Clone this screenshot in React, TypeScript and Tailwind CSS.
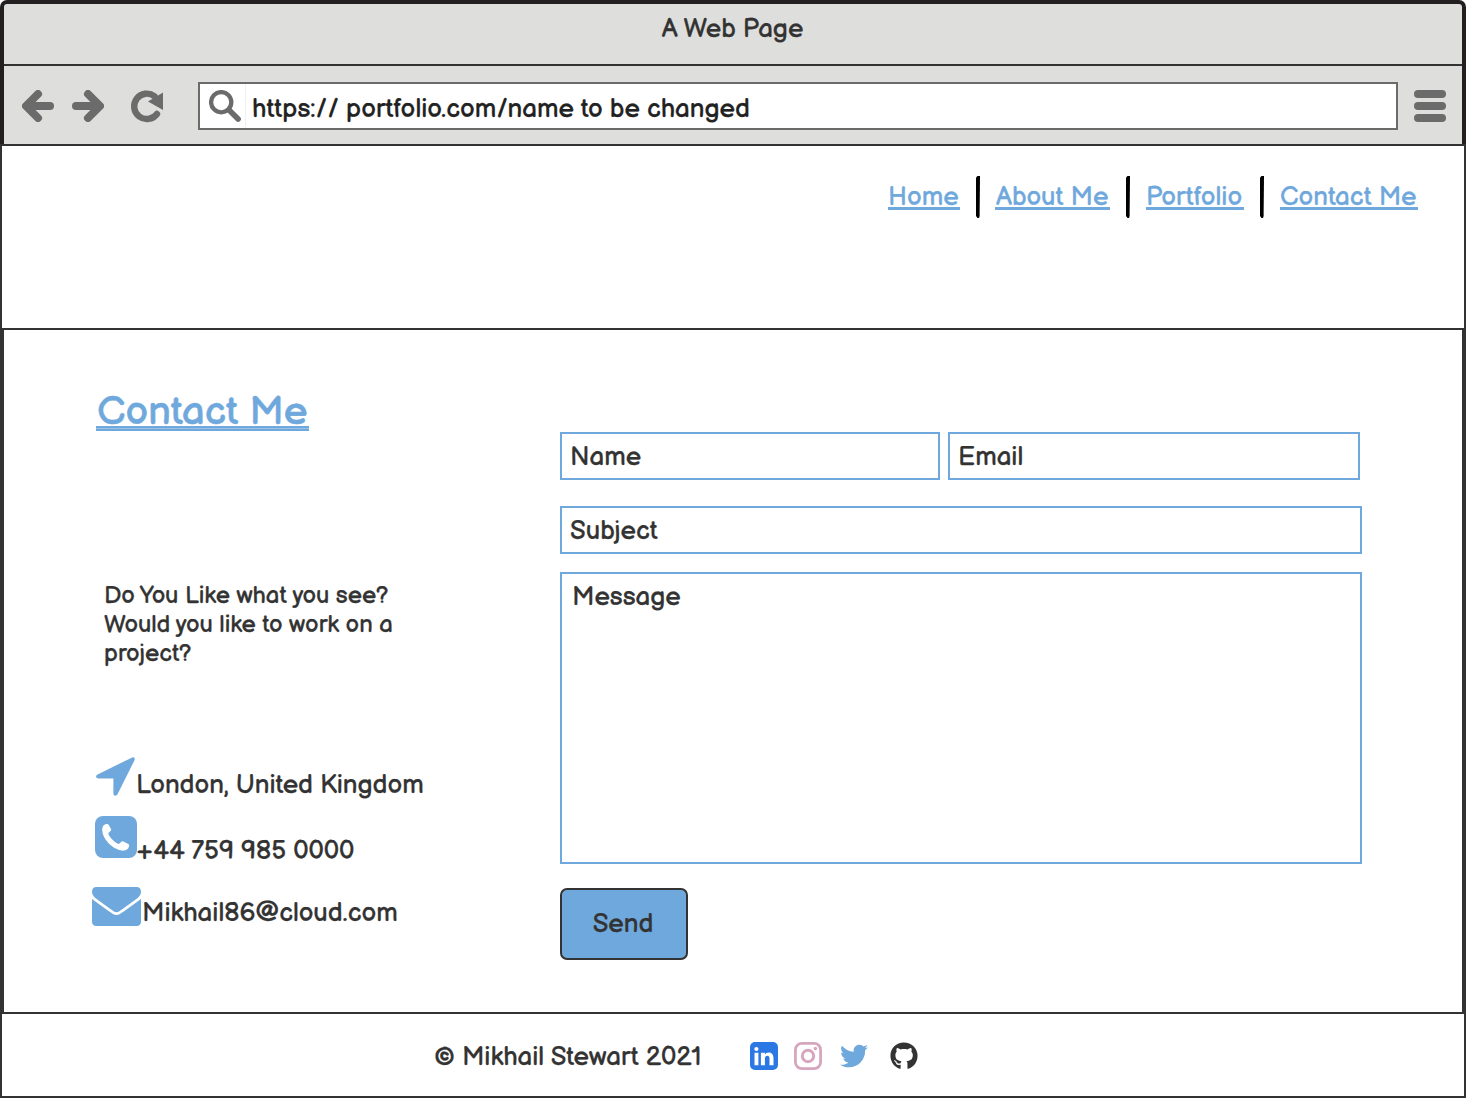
import type { ReactNode } from 'react';
import { FaGithub, FaTwitter } from 'react-icons/fa';

function ArrowIcon({ flip = false }: { flip?: boolean }) {
  return (
    <svg viewBox="0 0 32 32" className={flip ? 'size-8 -scale-x-100' : 'size-8'} fill="none" stroke="#6b6b6b" strokeWidth="8" strokeLinecap="round" strokeLinejoin="round">
      <path d="M16 4 4 16 16 28" />
      <path d="M8 16h20" />
      <path d="M-.3 16 2 13.5v5z" fill="#6b6b6b" stroke="none" />
    </svg>
  );
}

function RefreshIcon() {
  return (
    <svg viewBox="0 0 32 32" className="size-8 overflow-visible">
      <path d="M26 24A12.7 12.7 0 1 1 23.5 6.2" fill="none" stroke="#6b6b6b" strokeWidth="6.4" strokeLinecap="round" />
      <path d="M32 2.6V20L17 11.5z" fill="#6b6b6b" />
    </svg>
  );
}

function SearchIcon() {
  return (
    <svg viewBox="0 0 32 32" className="size-8" fill="none" stroke="#6b6b6b" strokeLinecap="round">
      <circle cx="12.2" cy="12.2" r="10.1" strokeWidth="4.3" />
      <path d="M20.5 20.5 29.1 29" strokeWidth="5.6" />
    </svg>
  );
}

function LocationIcon() {
  return (
    <svg viewBox="0 0 39 39" className="h-[39px] w-[39px]" fill="#6fa8dc">
      <path d="M36.2.4 1.6 17.4C-.8 18.6-.2 21.4 2.4 21.4H17.4V36.4C17.4 39 20.3 39.4 21.5 37.2L38.5 3.2C39.4 1.2 38-.5 36.2.4z" />
    </svg>
  );
}

function PhoneIcon() {
  return (
    <svg viewBox="0 0 42 42" className="h-[42px] w-[42px]">
      <rect width="42" height="42" rx="8" fill="#6fa8dc" />
      <path d="M8.9 9.1C10 8.200 11.5 7.8 12.6 7.900c.8.1 1 .7 1.300 1.400l2.100 3.600c.4.800.2 1.300-.3 1.900-1.200 1.300-2.800 2.200-2.200 3.700 1.300 2.800 5.700 7.300 9.500 9.300 1.300.5 2.200-1 3.300-2 .7-.6 1.300-.7 2.100-.3l4.400 2.300c.9.500 1.400.9 1.300 1.700-.1 1.500-.7 2.900-1.600 3.600-1.400 1.200-3.700 1.700-5.600 1.500-4.200-.5-9.500-3.400-13.100-7.100C9.500 23.100 7.300 18.500 7.200 14.300c0-2.200.5-4.200 1.700-5.200z" fill="#fff" />
    </svg>
  );
}

function MailIcon() {
  return (
    <svg viewBox="0 0 49 39" className="h-[39px] w-[49px]" fill="#6fa8dc">
      <path d="M4.500 0h40C47.500 0 49 2 49 4.500c0 3-1.700 5.400-4.300 7.200L29.500 22.700c-1.500 1-3.400 2.600-5 2.600s-3.500-1.600-5-2.600L4.300 11.700C1.700 9.900 0 7.500 0 4.500 0 2 1.500 0 4.500 0z" />
      <path d="M0 11.700c.8.900 1.700 1.700 2.700 2.400l14.200 10.200c2.600 1.800 5 3.700 7.600 3.700s5-1.900 7.600-3.700l14.200-10.200c1-.7 1.900-1.500 2.700-2.400v23.300c0 2.200-1.800 4-4 4H4c-2.200 0-4-1.800-4-4z" />
    </svg>
  );
}

function LinkedinIcon() {
  return (
    <svg viewBox="0 0 28 28" className="size-7">
      <rect width="28" height="28" rx="5" fill="#2b78e4" />
      <g fill="#fff">
        <circle cx="6.4" cy="7" r="2.1" />
        <path d="M4.500 10.800h3.900v12.400H4.500zM10.900 10.800h4v1.800c.8-1.300 2-2.100 3.900-2.100 2.900 0 4.700 1.900 4.700 5.600v7.100h-4v-6.600c0-1.700-.6-2.800-2.100-2.800-1.700 0-2.500 1.300-2.500 2.800v6.600h-4z" />
      </g>
    </svg>
  );
}

function InstagramIcon() {
  return (
    <svg viewBox="0 0 28 28" className="size-7" fill="none" stroke="#d5a6bd">
      <rect x="1.4" y="1.4" width="25.2" height="25.2" rx="6.500" strokeWidth="2.800" />
      <circle cx="14" cy="14" r="5.7" strokeWidth="3" />
      <circle cx="21.400" cy="6.600" r="1.800" fill="#d5a6bd" stroke="none" />
    </svg>
  );
}

function NavLink({ children, className }: { children: ReactNode; className: string }) {
  return (
    <a href="#" className={`mt-0.5 flex h-8 border-b-[3px] border-[#6fa8dc] leading-[40px] text-[#6fa8dc] ${className}`}>
      {children}
    </a>
  );
}

function Divider() {
  return (
    <svg viewBox="0 0 4 42" className="h-[42px] w-1 shrink-0">
      <path d="M0 1.500 1.500 0H4L3.600 40 3 42H1.500L0 40z" />
    </svg>
  );
}

function Field({ label, className }: { label: string; className: string }) {
  return <div className={`border-2 border-[#6fa8dc] px-2 leading-8 ${className}`}>{label}</div>;
}

export default function App() {
  return (
    <div className="flex h-[1098px] w-[1466px] flex-col overflow-hidden whitespace-nowrap bg-white font-['Balsamiq_Sans','Lato',sans-serif] text-[26px] leading-8 text-[#333] [-webkit-text-stroke:0.25px]">
      <div className="flex h-[144px] shrink-0 flex-col rounded-t-[7px] border-4 border-b-0 border-[#231f20] bg-[#dededd]">
        <div className="flex h-[62px] justify-center border-b-2 border-[#333] pr-px pt-2.5">A Web Page</div>
        <div className="flex flex-1 items-start pt-4">
          <div className="ml-[18px] mt-2 flex">
            <ArrowIcon />
            <div className="ml-[18px]"><ArrowIcon flip /></div>
            <div className="ml-[27px]"><RefreshIcon /></div>
          </div>
          <div className="ml-[35px] flex h-12 w-[1200px] border-2 border-[#6b6b6b] bg-white text-[#222]">
            <div className="w-[46px] border-r border-[#f0f0f0] pl-[9px] pt-1.5"><SearchIcon /></div>
            <div className="pl-1.5 pt-2.5">https:// portfolio.com/name to be changed</div>
          </div>
          <div className="ml-4 mt-2 flex flex-col gap-1">
            <div className="h-2 w-8 rounded-full bg-[#6b6b6b]" />
            <div className="h-2 w-8 rounded-full bg-[#6b6b6b]" />
            <div className="h-2 w-8 rounded-full bg-[#6b6b6b]" />
          </div>
        </div>
      </div>

      <nav className="flex h-[184px] shrink-0 items-start justify-end border-2 border-b-0 border-[#333] pr-[46px] pt-[30px]">
        <NavLink className="w-[72px]">Home</NavLink>
        <div className="ml-4 mr-[15px]"><Divider /></div>
        <NavLink className="w-[115px] pl-px">About Me</NavLink>
        <div className="mx-4"><Divider /></div>
        <NavLink className="w-[98px]">Portfolio</NavLink>
        <div className="mx-4"><Divider /></div>
        <NavLink className="w-[138px]">Contact Me</NavLink>
      </nav>

      <main className="flex h-[684px] shrink-0 border-x-4 border-t-2 border-[#333]">
        <section className="w-[556px] pl-[84px] pt-[55px]">
          <h1 className="ml-2 h-[47px] w-[213px] text-[40px] text-[#6fa8dc] [-webkit-text-stroke:0.5px]">
            <span className="block h-[41px] pl-px leading-[55px] tracking-[0.05px]">Contact Me</span>
            <span className="block h-0.5 bg-[#6fa8dc]" />
            <span className="block h-px bg-[#9ac2e7]" />
            <span className="block h-0.5 bg-[#6fa8dc]" />
          </h1>
          <p className="ml-4 mt-[149px] text-[24px] leading-[29px]">
            Do You Like what you see?
            <br />
            Would you like to work on a
            <br />
            project?
          </p>
          <div className="ml-2 mt-[89px] flex h-[39px]">
            <LocationIcon />
            <span className="ml-px mt-[13px]">London, United Kingdom</span>
          </div>
          <div className="ml-[6.6px] mt-[19.5px] flex h-[42px]">
            <PhoneIcon />
            <span className="-ml-[0.6px] mt-[20.5px]">+44 759 985 0000</span>
          </div>
          <div className="ml-[3.6px] mt-[29.5px] flex h-[39px]">
            <MailIcon />
            <span className="ml-[1.4px] mt-[11px]">Mikhail86@cloud.com</span>
          </div>
        </section>

        <section className="pt-[102px]">
          <div className="flex gap-2">
            <Field label="Name" className="h-12 w-[380px] pt-2" />
            <Field label="Email" className="h-12 w-[412px] pt-2" />
          </div>
          <Field label="Subject" className="mt-[26px] h-12 w-[802px] pt-2" />
          <Field label="Message" className="mt-[18px] h-[292px] w-[802px] pl-2.5 pt-2" />
          <button className="mt-6 flex h-[72px] w-32 items-start justify-center rounded-[7px] border-2 border-[#333] bg-[#6fa8dc] pr-0.5 pt-[19px] leading-8">
            Send
          </button>
        </section>
      </main>

      <footer className="flex h-[86px] shrink-0 border-2 border-[#333] pl-[432px] pt-7">
        <span className="w-[315.6px]">© Mikhail Stewart 2021</span>
        <div className="flex items-start">
          <LinkedinIcon />
          <div className="ml-4"><InstagramIcon /></div>
          <FaTwitter className="ml-[18px] size-7 text-[#6fa8dc]" />
          <FaGithub className="ml-[22px] size-7 text-[#333]" />
        </div>
      </footer>
    </div>
  );
}
